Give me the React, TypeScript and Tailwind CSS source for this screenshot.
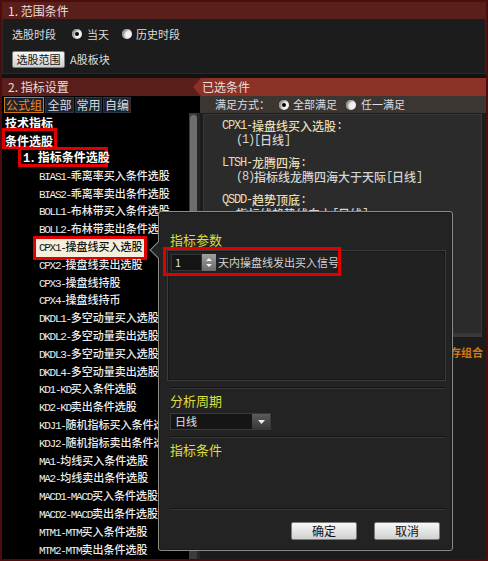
import React from 'react';

const MONO = "font-['Liberation_Mono',monospace]";

const listItems = [
  'BIAS1-乖离率买入条件选股',
  'BIAS2-乖离率卖出条件选股',
  'BOLL1-布林带买入条件选股',
  'BOLL2-布林带卖出条件选股',
  'CPX1-操盘线买入选股',
  'CPX2-操盘线卖出选股',
  'CPX3-操盘线持股',
  'CPX4-操盘线持币',
  'DKDL1-多空动量买入选股',
  'DKDL2-多空动量卖出选股',
  'DKDL3-多空动量买入选股',
  'DKDL4-多空动量卖出选股',
  'KD1-KD买入条件选股',
  'KD2-KD卖出条件选股',
  'KDJ1-随机指标买入条件选股',
  'KDJ2-随机指标卖出条件选股',
  'MA1-均线买入条件选股',
  'MA2-均线卖出条件选股',
  'MACD1-MACD买入条件选股',
  'MACD2-MACD卖出条件选股',
  'MTM1-MTM买入条件选股',
  'MTM2-MTM卖出条件选股',
];

const chosen = [
  { title: 'CPX1-操盘线买入选股:', detail: '(1)[日线]' },
  { title: 'LTSH-龙腾四海:', detail: '(8)指标线龙腾四海大于天际[日线]' },
  { title: 'QSDD-趋势顶底:', detail: '指标线趋势线向上[日线]' },
];

// ascii runs get the narrow mono face, like the bitmap font of the original
function Mixed({ text, tight }: { text: string; tight: string }) {
  const parts = text.split(/([\x21-\x7e]+)/);
  return (
    <>
      {parts.map((p, i) =>
        i % 2 === 1 ? (
          <span key={i} className={`${MONO} ${tight}`}>{p}</span>
        ) : (
          <React.Fragment key={i}>{p}</React.Fragment>
        )
      )}
    </>
  );
}

function Radio({ checked }: { checked?: boolean }) {
  return (
    <span className="inline-flex w-[10px] h-[10px] shrink-0 rounded-full bg-[#f2f2f2] shadow-[inset_2px_1px_2px_#8a8a8a] items-center justify-center">
      {checked && <span className="w-[4px] h-[4px] rounded-full bg-black" />}
    </span>
  );
}

function GrayButton({ label, className }: { label: string; className: string }) {
  return (
    <div className={`flex items-center justify-center rounded-[2px] border border-[#7c7c7c] bg-linear-to-b from-[#f8f8f8] to-[#d0d0d0] text-[#111] ${className}`}>
      {label}
    </div>
  );
}

function Separator() {
  return <div className="ml-[3px] mr-[1px] h-[2px] shrink-0 border-t border-[#141414] border-b border-b-[#363636]" />;
}

const App: React.FC = () => {
  return (
    <div className="relative w-[488px] h-[561px] overflow-hidden border-2 border-[#4b0d0d] bg-[#121212] flex flex-col font-['Noto_Sans_CJK_SC',sans-serif] text-[12px] leading-none text-[#dcdcdc]">
      {/* 1. 范围条件 */}
      <div className="h-[17px] shrink-0 bg-[#5a1f1b] flex items-center pl-[6px] text-[#e8dedb]">1. 范围条件</div>
      <div className="h-[55px] shrink-0 bg-[#1c1c1c] border border-[#2a2a2a] border-t-0 px-[9px] flex flex-col text-[11px]">
        <div className="mt-[6px] h-[18px] flex items-center">
          <span>选股时段</span>
          <span className="ml-[16px] flex items-center"><Radio checked /></span>
          <span className="ml-[5px]">当天</span>
          <span className="ml-[13px] flex items-center"><Radio /></span>
          <span className="ml-[4px]">历史时段</span>
        </div>
        <div className="mt-[8px] h-[17px] flex items-center">
          <GrayButton label="选股范围" className="w-[53px] h-[17px]" />
          <span className="ml-[5px]">A股板块</span>
        </div>
      </div>

      {/* 2. 指标设置 header */}
      <div className="mt-[4px] h-[18px] shrink-0 flex bg-[#5a1f1b] text-[#eadfdb]">
        <div className="flex-1 flex items-center pl-[6px]">2. 指标设置</div>
        <div className="w-[293px] bg-[#8c3126] [clip-path:polygon(8px_0,100%_0,100%_100%,8px_100%,0_50%)] flex items-center pl-[9px]">已选条件</div>
      </div>

      <div className="flex-1 flex min-h-0">
        {/* left column */}
        <div className="w-[198px] shrink-0 flex flex-col bg-black">
          <div className="h-[17px] shrink-0 flex items-start pt-[1px] pl-[2px] gap-[1px]">
            <div className="w-[40px] h-[16px] flex items-center justify-center border border-[#d27812] bg-[#1b2230] text-[#ee8a22]">公式组</div>
            <div className="w-[29px] h-[16px] flex items-center justify-center border border-[#2c3544] bg-[#1b2230]">全部</div>
            <div className="w-[27px] h-[16px] flex items-center justify-center border border-[#2c3544] bg-[#1b2230]">常用</div>
            <div className="w-[28px] h-[16px] flex items-center justify-center border border-[#2c3544] bg-[#1b2230]">自编</div>
          </div>
          <div className="flex-1 flex min-h-0">
            <div className="w-[187px] shrink-0 pt-[1px] text-[#ececec] font-medium">
              <div className="h-[17.8px] flex items-center pl-[3px] font-bold text-[12px] text-white">技术指标</div>
              <div className="relative h-[17.8px] flex items-center pl-[3px] font-bold text-[12px] text-white">
                <span className="absolute left-0 top-[-3.6px] w-[55px] h-[21px] border-[3px] border-[#e10000]" />
                <span className="relative">条件选股</span>
              </div>
              <div className="relative h-[17.8px] flex items-center pl-[21px] font-bold text-[12px] text-white">
                <span className="absolute left-[16px] top-[-2.8px] w-[90px] h-[20px] border-[3px] border-[#e10000]" />
                <span className="relative"><Mixed text="1." tight="tracking-[-1.2px]" /> 指标条件选股</span>
              </div>
              {listItems.map((item, i) => (
                <div key={item} className="relative h-[17.8px] flex items-center pl-[37px] text-[11px] whitespace-nowrap">
                  {i === 4 && (
                    <span className="absolute left-[31px] top-[-2.6px] w-[114px] h-[24px] border-[3px] border-[#e10000] bg-[#f3efdd]" />
                  )}
                  <span className={i === 4 ? 'relative text-[#111]' : 'relative'}>
                    <Mixed text={item} tight="tracking-[-1.3px]" />
                  </span>
                </div>
              ))}
            </div>
            <div className="w-[11px] shrink-0 bg-[#3c3c3c] border-r-[3px] border-[#262626] pt-[2px] pl-[1px]">
              <div className="w-[7px] h-[230px] rounded-full bg-[#6e6e6e]" />
            </div>
          </div>
        </div>

        {/* right column */}
        <div className="flex-1 flex flex-col bg-[#1c1c1c] min-w-0">
          <div className="h-[17px] shrink-0 bg-[#3b3632] flex items-center pl-[15px] text-[11px] text-[#dedede]">
            <span>满足方式：</span>
            <span className="ml-[9px] flex items-center"><Radio checked /></span>
            <span className="ml-[4px]">全部满足</span>
            <span className="ml-[9px] flex items-center"><Radio /></span>
            <span className="ml-[5px]">任一满足</span>
          </div>
          <div className="mt-[1px] ml-[3px] w-[279px] h-[220px] shrink-0 bg-[#2b2b2b] border border-[#363636] pt-[4px] pl-[18px] text-[12px] font-medium">
            {chosen.map(c => (
              <div key={c.title} className="mb-[9px]">
                <div className="h-[14px] flex items-center text-[#e6dcb2] whitespace-nowrap">
                  <Mixed text={c.title} tight="tracking-[-1.2px]" />
                </div>
                <div className="h-[14px] flex items-center pl-[14px] text-[#d4d4d4] whitespace-nowrap">
                  <Mixed text={c.detail} tight="tracking-[-1.2px]" />
                </div>
              </div>
            ))}
          </div>
          <div className="ml-[3px] w-[279px] h-[3px] shrink-0 bg-[#393939]" />
          <div className="mt-[9px] h-[12px] flex items-center justify-end pr-[3px] text-[11px] font-bold text-[#d2780e]">保存组合</div>
        </div>
      </div>

      {/* 指标参数 popup */}
      <div className="absolute left-[156px] top-[209px] w-[295px] h-[340px] rounded-[3px] border border-[#8c8c84] bg-[#232323] shadow-[inset_0_0_0_1px_#1a1a1a] pl-[8px] pr-[6px] pt-[19px] pb-[10px] flex flex-col">
        <span className="absolute left-[-7px] top-[32px] w-[12px] h-[12px] rotate-45 border-l border-b border-[#8c8c84] bg-[#232323]" />
        <span className="absolute left-[4px] top-[35px] w-[178px] h-[29px] border-[3px] border-[#e10000]" />

        <div className="h-[16px] shrink-0 flex items-center pl-[3px] text-[13px] text-[#dede3c]">指标参数</div>
        <div className="mt-[3px] h-[131px] shrink-0 border border-[#3c3c3c] bg-[#212121] shadow-[inset_0_0_0_1px_#171717] p-[3px]">
          <div className="h-[17px] flex items-center text-[11px]">
            <div className="w-[31px] h-[17px] bg-[#141414] border border-[#333] flex items-center pl-[3px] text-[#e0e0e0]">1</div>
            <div className="w-[14px] h-[17px] bg-linear-to-b from-[#a0a0a0] to-[#6a6a6a] flex flex-col items-center justify-center gap-[3px]">
              <svg width="6" height="3" viewBox="0 0 6 3"><path d="M0 3 L3 0 L6 3 Z" fill="#f4f4f4" /></svg>
              <svg width="6" height="3" viewBox="0 0 6 3"><path d="M0 0 L6 0 L3 3 Z" fill="#f4f4f4" /></svg>
            </div>
            <span className="ml-[2px] text-[#d4d4d4]">天内操盘线发出买入信号</span>
          </div>
        </div>

        <div className="mt-[6px]"><Separator /></div>
        <div className="mt-[3px] h-[16px] shrink-0 flex items-center pl-[3px] text-[13px] text-[#dede3c]">分析周期</div>
        <div className="mt-[5px] ml-[3px] w-[101px] h-[17px] shrink-0 border border-[#3a3a3a] bg-[#151515] flex text-[11px]">
          <span className="flex-1 flex items-center pl-[4px] text-[#e0e0e0]">日线</span>
          <span className="w-[18px] bg-linear-to-b from-[#5c5c5c] to-[#383838] flex items-center justify-center">
            <svg width="7" height="4" viewBox="0 0 7 4"><path d="M0 0 L7 0 L3.5 4 Z" fill="#f0f0f0" /></svg>
          </span>
        </div>
        <div className="mt-[6px]"><Separator /></div>
        <div className="mt-[3px] h-[16px] shrink-0 flex items-center pl-[3px] text-[13px] text-[#dede3c]">指标条件</div>
        <div className="flex-1" />
        <Separator />
        <div className="mt-[12px] h-[18px] shrink-0 flex justify-end gap-[17px] pr-[6px] text-[12px]">
          <GrayButton label="确定" className="w-[66px] h-[18px]" />
          <GrayButton label="取消" className="w-[66px] h-[18px]" />
        </div>
      </div>
    </div>
  );
};

export default App;
